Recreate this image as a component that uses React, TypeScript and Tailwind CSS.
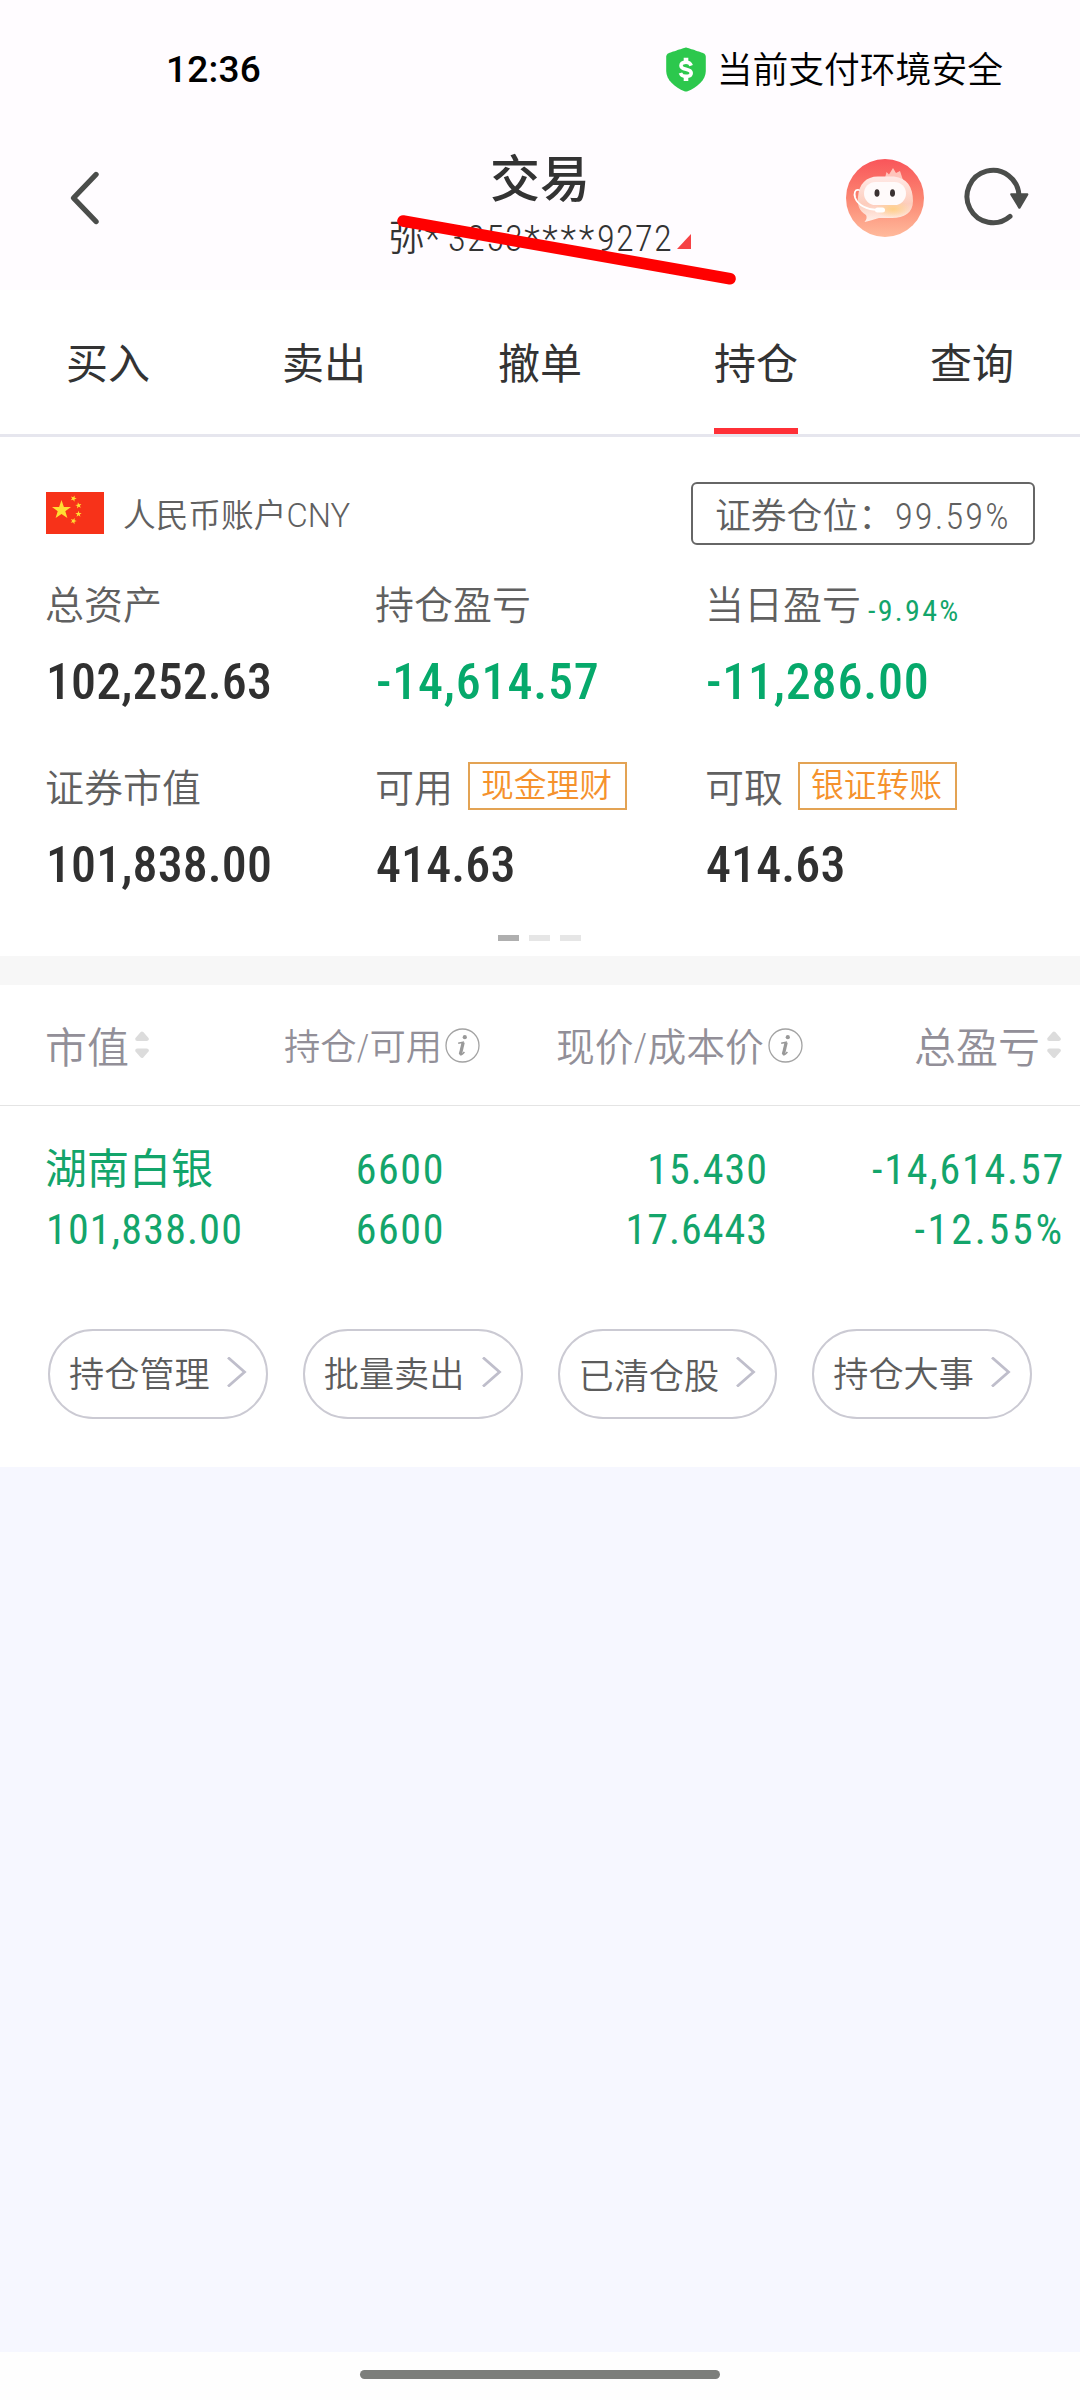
import { clsx } from "clsx"

const tabs = ["买入", "卖出", "撤单", "持仓", "查询"]

const assets = [
  { label: "总资产", value: "102,252.63" },
  { label: "持仓盈亏", value: "-14,614.57", down: true },
  { label: "当日盈亏", value: "-11,286.00", down: true, rate: "-9.94%" },
  { label: "证券市值", value: "101,838.00" },
  { label: "可用", value: "414.63", tag: "现金理财" },
  { label: "可取", value: "414.63", tag: "银证转账" },
]

const actions = ["持仓管理", "批量卖出", "已清仓股", "持仓大事"]

function ShieldIcon() {
  return (
    <svg width="40" height="45" viewBox="0 0 40 45">
      <path
        d="M20 0.5 C20.8 0.5 36 5.6 37.4 6.2 C39 6.9 39.8 8 39.8 9.8 V24 C39.8 33 31 40.5 21.6 44.3 C20.5 44.7 19.5 44.7 18.4 44.3 C9 40.5 0.2 33 0.2 24 V9.8 C0.2 8 1 6.9 2.6 6.2 C4 5.6 19.2 0.5 20 0.5 Z"
        fill="#2cc84d"
      />
      <path
        d="M25.2 18.6 C24.4 16.4 22.6 15.3 20 15.3 C17 15.3 15 16.6 15 18.7 C15 21 17 21.6 20 22.2 C23.2 22.9 25.2 23.7 25.2 26 C25.2 28.2 23.2 29.4 20 29.4 C17.2 29.4 15.2 28.2 14.4 26"
        fill="none"
        stroke="#fff"
        strokeWidth="3.6"
      />
      <path d="M20 10.8 V15 M20 30 V34" stroke="#fff" strokeWidth="4.6" />
    </svg>
  )
}

function RobotAvatar() {
  return (
    <svg width="78" height="78" viewBox="0 0 78 78">
      <defs>
        <linearGradient id="avatarBg" x1="0" y1="0" x2="0" y2="1">
          <stop offset="0" stopColor="#f9555a" />
          <stop offset="0.5" stopColor="#fb8571" />
          <stop offset="1" stopColor="#ffba9c" />
        </linearGradient>
        <linearGradient id="avatarHead" x1="0" y1="0" x2="0" y2="1">
          <stop offset="0" stopColor="#ffe9e6" />
          <stop offset="0.6" stopColor="#fdcdbd" />
          <stop offset="1" stopColor="#fff0ea" />
        </linearGradient>
        <radialGradient id="avatarChin" cx="0.5" cy="0.5" r="0.5">
          <stop offset="0" stopColor="#ffd088" />
          <stop offset="1" stopColor="#ffd088" stopOpacity="0" />
        </radialGradient>
      </defs>
      <circle cx="39" cy="39" r="39" fill="url(#avatarBg)" />
      <path d="M39 19 L40.5 13 L43 15.5 L47 9 L50 14 L54 12 L57 21 Z" fill="#ffc4bb" />
      <path
        d="M32 17.5 H48 C61 19 67 28 67 42 C67 54 58 59 46 59 H33 C28 60 25 62 18.5 63 C21 60 21 58 20 56 C13 52 11 45 12 38 C13 25 20 17.5 32 17.5 Z"
        fill="url(#avatarHead)"
      />
      <ellipse cx="47" cy="50" rx="18" ry="9" fill="url(#avatarChin)" />
      <rect x="18" y="23" width="42" height="23" rx="11.5" fill="#fffafa" />
      <ellipse cx="31" cy="34" rx="2.5" ry="3.8" fill="#3a3131" />
      <ellipse cx="46.5" cy="34" rx="2.5" ry="3.8" fill="#3a3131" />
      <path
        d="M13 31 C9 30 7.6 34 9.2 39 C12 46.5 22 51 31 51"
        fill="none"
        stroke="#fff"
        strokeWidth="1.8"
        strokeLinecap="round"
      />
      <rect x="29" y="48.5" width="10" height="5" rx="2.5" fill="#fff" />
    </svg>
  )
}

function RefreshIcon() {
  return (
    <svg width="68" height="66" viewBox="0 0 68 66" fill="none">
      <path
        d="M58 31 A26 26.2 0 1 0 49 51.4"
        stroke="#4b4d4b"
        strokeWidth="5"
        strokeLinecap="round"
      />
      <path d="M50.4 29.4 H66.2 L58.4 42.6 Z" fill="#4b4d4b" stroke="#4b4d4b" strokeWidth="2.4" strokeLinejoin="round" />
    </svg>
  )
}

function FlagIcon() {
  const star = "0,-10 2.4,-3.1 9.5,-3.1 3.8,1.2 5.9,8.1 0,4 -5.9,8.1 -3.8,1.2 -9.5,-3.1 -2.4,-3.1"
  return (
    <svg width="58" height="42" viewBox="0 0 58 42">
      <rect width="58" height="42" fill="#f73219" />
      <g fill="#ffde33">
        <polygon points={star} transform="translate(15.5 18)" />
        <polygon points={star} transform="translate(27.5 6.5) rotate(20) scale(.33)" />
        <polygon points={star} transform="translate(32.5 13.5) rotate(-10) scale(.33)" />
        <polygon points={star} transform="translate(32.5 22) scale(.33)" />
        <polygon points={star} transform="translate(27.5 29) rotate(20) scale(.33)" />
      </g>
    </svg>
  )
}

function SortIcon() {
  return (
    <svg width="14" height="30" viewBox="0 0 14 30" fill="#dcdcdc" stroke="#dcdcdc" strokeWidth="4" strokeLinejoin="round">
      <path d="M7 3.5 L11.8 9 H2.2 Z" />
      <path d="M7 26 L11.8 20.5 H2.2 Z" />
    </svg>
  )
}

function InfoIcon() {
  return (
    <svg width="35" height="35" viewBox="0 0 35 35" fill="none">
      <circle cx="17.5" cy="17.5" r="16.5" stroke="#a3a3a3" strokeWidth="1.3" />
      <circle cx="19.8" cy="9.2" r="2.1" fill="#999" />
      <path d="M13.2 15.2 L18 14.2 L15.2 25.4 C15 27.4 16.6 27.2 19.4 24" stroke="#999" strokeWidth="1.6" />
      <path d="M18.2 14.4 L15.4 26.4" stroke="#999" strokeWidth="3.2" />
    </svg>
  )
}

export default function App() {
  return (
    <div className="flex h-[2400px] w-[1080px] flex-col overflow-hidden bg-[#f6f7ff] font-['Roboto','Noto_Sans_CJK_SC',sans-serif] whitespace-nowrap text-[#333]">
      <header className="relative h-[290px] bg-[#fffcff]">
        {/* Status bar */}
        <div className="flex h-[138px] items-center justify-between pr-[77px] pl-[166px] text-black">
          <span className="pt-0.5 text-[37px] font-medium tracking-[0.2px]">12:36</span>
          <div className="flex items-center gap-[11px]">
            <ShieldIcon />
            <span className="pt-1.5 text-[35.8px] font-[350]">当前支付环境安全</span>
          </div>
        </div>

        {/* Title bar */}
        <div className="grid h-[120px] grid-cols-[300px_1fr_300px] items-center">
          <svg className="ml-[69px]" width="32" height="56" viewBox="0 0 32 56" fill="none">
            <path d="M27 4.5 L4.5 28 L27 51.5" stroke="#4b4d4b" strokeWidth="5.4" strokeLinecap="round" strokeLinejoin="round" />
          </svg>
          <div className="flex h-[120px] flex-col items-center pt-3">
            <h1 className="text-[50px] leading-[60px] font-medium">交易</h1>
            <div className="flex h-[58px] shrink-0 items-center font-light">
              <span className="text-[36px] font-[350]">弥</span>
              <span className="text-[36.5px] tracking-[-0.3px] font-stretch-condensed">*&nbsp;</span>
              <span className="text-[36.5px] tracking-[1.3px] font-stretch-condensed">3253</span>
              <span className="text-[36.5px] tracking-[2.7px] font-stretch-condensed">****</span>
              <span className="text-[36.5px] tracking-[1.3px] font-stretch-condensed">9272</span>
              <svg className="mt-1 ml-1" width="14" height="15" viewBox="0 0 14 15">
                <path d="M14 0 V15 H0 Z" fill="#f64245" />
              </svg>
            </div>
          </div>
          <div className="flex items-center pl-[66px]">
            <RobotAvatar />
            <div className="ml-[37px]">
              <RefreshIcon />
            </div>
          </div>
        </div>

        {/* Marker stroke over the account number */}
        <svg className="absolute top-[210px] left-[390px]" width="360" height="80" viewBox="0 0 360 80">
          <path d="M13 11 L340 68.7" stroke="#f00" strokeWidth="11.6" strokeLinecap="round" />
        </svg>
      </header>

      <nav className="grid h-[147px] grid-cols-5 border-b-[3px] border-[#e6e6ee] bg-white">
        {tabs.map((tab) => (
          <div key={tab} className="flex flex-col items-center">
            <span className="flex h-[138px] items-center pt-2.5 text-[42px]">{tab}</span>
            {tab === "持仓" && <span className="h-1.5 w-[84px] bg-[#ff3037]" />}
          </div>
        ))}
      </nav>

      <section className="h-[519px] bg-white">
        <div className="mt-[45px] flex h-[63px] items-center justify-between pr-[45px] pl-[46px] text-[#606060]">
          <div className="flex items-center">
            <FlagIcon />
            <span className="mt-1.5 ml-[19px] text-[32.7px] font-[350]">
              人民币账户<span className="font-light">CNY</span>
            </span>
          </div>
          <div className="flex h-[63px] w-[344px] items-center rounded-md border-2 border-[#666] pt-2 pl-[22px] text-[35.8px]">
            <span className="font-[350]">证券仓位：</span>
            <span className="ml-px text-[36.5px] font-light tracking-[2.1px] font-stretch-condensed">99.59%</span>
          </div>
        </div>

        <div className="grid grid-cols-[330px_330px_1fr] pl-[45px]">
          {assets.map((item) => (
            <div key={item.label} className="h-[183px] pt-[31px]">
              <div className="flex h-[60px] items-center text-[39px] font-[350] text-[#606060]">
                <span>{item.label}</span>
                {item.rate && (
                  <span className="mt-2 ml-[7px] text-[30px] font-normal tracking-[2.3px] text-[#13a56b] font-stretch-condensed">
                    {item.rate}
                  </span>
                )}
                {item.tag && (
                  <span className="mb-[7px] ml-[15px] flex h-12 w-[159px] items-center justify-center border-2 border-[#e3a354] pt-0.5 pr-0.5 text-[32.8px] text-[#f5922d]">
                    {item.tag}
                  </span>
                )}
              </div>
              <div
                className={clsx(
                  "mt-4 h-[60px] pl-px text-[50px] leading-[60px] font-[460] font-stretch-condensed",
                  item.down ? "tracking-[0.8px] text-[#06a96b]" : "tracking-[0.1px] text-[#303030]",
                )}
              >
                {item.value}
              </div>
            </div>
          ))}
        </div>

        <div className="flex justify-center gap-2.5 pt-[24px] pr-0.5">
          <span className="h-1.5 w-[21px] bg-[#afafaf]" />
          <span className="h-1.5 w-[21px] bg-[#e6e6e6]" />
          <span className="h-1.5 w-[21px] bg-[#e6e6e6]" />
        </div>
      </section>

      <div className="h-[29px] bg-[#f7f7f7]" />

      <section className="h-[482px] bg-white">
        <div className="grid h-[121px] grid-cols-[284px_272px_1fr_auto] items-center border-b border-[#e4e4e4] pr-[19px] font-[350] text-[#928f98]">
          <div className="flex items-center gap-1.5 pl-[45px]">
            <span className="pt-1.5 text-[42px]">市值</span>
            <SortIcon />
          </div>
          <div className="flex items-center gap-[3px]">
            <span className="pt-1.5 text-[36.3px] font-stretch-condensed">持仓/可用</span>
            <InfoIcon />
          </div>
          <div className="flex items-center gap-1">
            <span className="pt-1.5 text-[38.8px] font-stretch-semi-condensed">现价/成本价</span>
            <InfoIcon />
          </div>
          <div className="flex items-center gap-[7px]">
            <span className="pt-1.5 text-[42px]">总盈亏</span>
            <SortIcon />
          </div>
        </div>

        <div className="grid h-[223px] grid-cols-[300px_145px_323px_1fr] pt-[34px] pr-[15px] text-right text-[42px] leading-[60px] tracking-[1.6px] text-[#13a56b] font-stretch-condensed">
          <div className="pl-[45px] text-left">
            <div className="tracking-normal">湖南白银</div>
            <div className="pl-px tracking-[1.2px]">101,838.00</div>
          </div>
          <div>
            <div>6600</div>
            <div>6600</div>
          </div>
          <div className="tracking-[1px]">
            <div>15.430</div>
            <div>17.6443</div>
          </div>
          <div>
            <div className="tracking-[1.8px]">-14,614.57</div>
            <div className="tracking-[2.8px]">-12.55%</div>
          </div>
        </div>

        <div className="grid grid-cols-4 gap-[35px] px-12">
          {actions.map((action) => (
            <button
              key={action}
              className="flex h-[90px] items-center rounded-full border-2 border-[#cbcad3] pl-[19px] text-[35.2px] font-[350] text-[#5c5c5c]"
            >
              <span className={action === "已清仓股" ? "pt-1.5" : "pt-0.5"}>{action}</span>
              <svg className="mb-1 ml-[17px]" width="20" height="30" viewBox="0 0 20 30" fill="none">
                <path d="M1 0.5 L17.5 15 L1 29.5" stroke="#bfbecb" strokeWidth="2.8" />
              </svg>
            </button>
          ))}
        </div>
      </section>

      {/* Gesture bar */}
      <footer className="mt-auto flex h-12 justify-center bg-[#fefefe] pt-[18px]">
        <div className="h-[9px] w-[360px] rounded-full bg-[#7c7e7b]" />
      </footer>
    </div>
  )
}
